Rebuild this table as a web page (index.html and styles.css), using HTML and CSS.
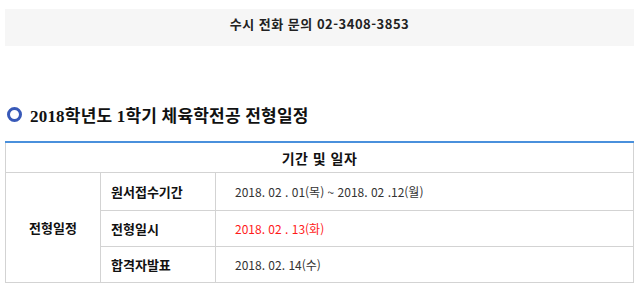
FILE: index.html
```html
<!DOCTYPE html>
<html lang="ko">
<head>
<meta charset="utf-8">
<link rel="stylesheet" href="styles.css">
</head>
<body>
<div class="page">
  <div class="contact">수시 전화 문의 02-3408-3853</div>
  <h2 class="title"><span class="ring"></span><span class="title-text">2018학년도 1학기 체육학전공 전형일정</span></h2>
  <table class="sched">
    <thead>
      <tr><th colspan="3" class="head">기간 및 일자</th></tr>
    </thead>
    <tbody>
      <tr class="r1">
        <td rowspan="3" class="group">전형일정</td>
        <td class="label">원서접수기간</td>
        <td class="date">2018. 02 . 01(목) ~ 2018. 02 .12(월)</td>
      </tr>
      <tr class="r2">
        <td class="label">전형일시</td>
        <td class="date red">2018. 02 . 13(화)</td>
      </tr>
      <tr class="r3">
        <td class="label">합격자발표</td>
        <td class="date">2018. 02. 14(수)</td>
      </tr>
    </tbody>
  </table>
</div>
</body>
</html>
```

FILE: styles.css
```css
html, body {
  margin: 0;
  padding: 0;
  background: #fff;
}
body {
  font-family: "Noto Sans CJK KR", "Liberation Sans", sans-serif;
  color: #222;
}
.page {
  padding: 9px 6px 0 5px;
}
.contact {
  background: #f6f6f6;
  height: 37px;
  line-height: 30px;
  text-align: center;
  font-size: 13px;
  font-weight: bold;
  color: #222;
  letter-spacing: 0.5px;
}
.title {
  display: flex;
  align-items: center;
  margin: 53px 0 0 2px;
  height: 30px;
  font-weight: normal;
}
.ring {
  width: 9px;
  height: 9px;
  border: 3px solid #3859b8;
  border-radius: 50%;
  margin-right: 8px;
}
.title-text {
  font-family: "Liberation Serif", "Noto Sans CJK KR", serif;
  font-size: 17px;
  font-weight: bold;
  color: #111;
  letter-spacing: 0.2px;
}
.sched {
  margin-top: 12px;
  width: 100%;
  border-collapse: collapse;
  border-top: 2px solid #4a90dc;
  font-size: 12px;
}
.sched th, .sched td {
  border: 1px solid #d3d3d3;
  padding: 0;
}
.head {
  height: 29px;
  font-size: 14px;
  font-weight: bold;
  text-align: center;
  color: #111;
  letter-spacing: 0.5px;
}
.group {
  width: 94px;
  text-align: center;
  font-weight: bold;
  font-size: 13px;
  color: #111;
}
.label {
  width: 104px;
  padding-left: 10px !important;
  font-weight: bold;
  font-size: 13px;
  color: #111;
}
.date {
  padding-left: 19px !important;
  font-size: 12px;
  color: #333;
}
.red {
  color: #ff1a1a;
}
.r1 td { height: 37px; }
.r2 td { height: 35px; }
.r3 td { height: 35px; }
```
